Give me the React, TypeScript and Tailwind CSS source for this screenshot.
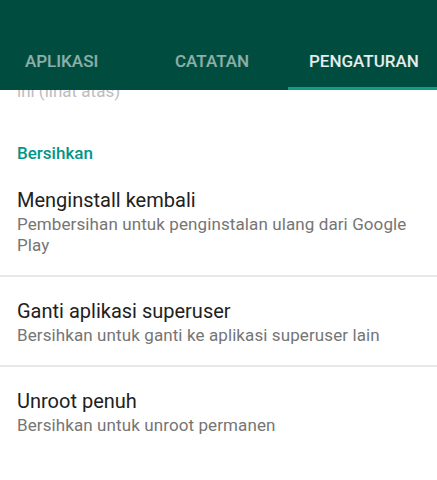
const tabs = [
  { label: 'APLIKASI', cls: 'w-[150px] pl-[25px]', active: false },
  { label: 'CATATAN', cls: 'w-[138px] pl-[25px]', active: false },
  { label: 'PENGATURAN', cls: 'flex-1 pl-[21px]', active: true },
]

const items = [
  {
    title: 'Menginstall kembali',
    desc: 'Pembersihan untuk penginstalan ulang dari Google Play',
    pad: 'pt-[25px] pb-[19px]',
  },
  {
    title: 'Ganti aplikasi superuser',
    desc: 'Bersihkan untuk ganti ke aplikasi superuser lain',
    pad: 'pt-[22px] pb-[19px]',
  },
  {
    title: 'Unroot penuh',
    desc: 'Bersihkan untuk unroot permanen',
    pad: 'pt-[22px] pb-[20px]',
  },
]

export default function App() {
  return (
    <div className="w-[437px] h-[480px] overflow-hidden bg-white font-['Roboto',sans-serif]">
      <div className="h-[90px] flex bg-[#004d40]">
        {tabs.map((t) => (
          <div
            key={t.label}
            className={`${t.cls} flex flex-col justify-end ${
              t.active ? 'border-b-[3px] border-[#139a88] pb-[16px]' : 'pb-[19px]'
            }`}
          >
            <span
              className={`text-[17px] leading-[20px] font-medium ${
                t.active ? 'text-white/90' : 'text-white/55'
              }`}
            >
              {t.label}
            </span>
          </div>
        ))}
      </div>

      <div className="overflow-hidden">
        <div className="-mt-[9px] px-[17px] text-[17px] leading-[20px] text-[#bdbdbd]">
          ini (lihat atas)
        </div>
        <div className="mt-[42px] px-[17px] text-[17px] leading-[20px] font-medium text-[#009688]">
          Bersihkan
        </div>

        {items.map((it, i) => (
          <div key={it.title}>
            <div className={`${it.pad} px-[17px]`}>
              <div className="text-[20px] leading-[24px] text-[#212121]">{it.title}</div>
              <div className="mt-[2px] text-[17px] leading-[21px] tracking-[0.1px] text-[#757575]">
                {it.desc}
              </div>
            </div>
            {i < items.length - 1 && <div className="h-[2px] bg-[#e8e8e8]" />}
          </div>
        ))}
      </div>
    </div>
  )
}
